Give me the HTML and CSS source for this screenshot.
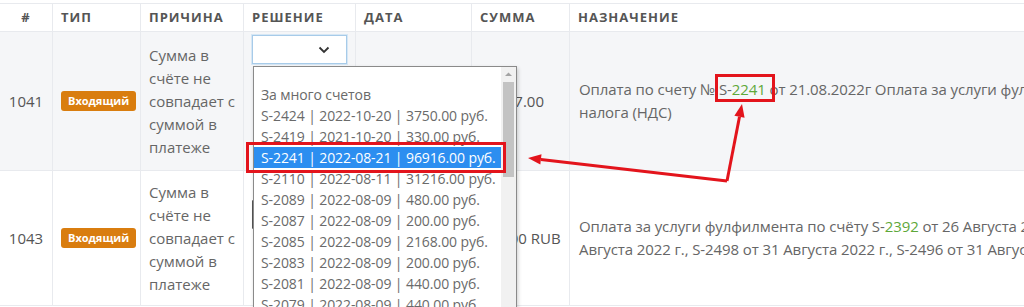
FILE: index.html
```html
<!DOCTYPE html>
<html lang="ru">
<head>
<meta charset="utf-8">
<link rel="stylesheet" href="styles.css">
</head>
<body>
<div class="page">
  <div class="grid">
    <div class="cell head center">#</div>
    <div class="cell head">Тип</div>
    <div class="cell head">Причина</div>
    <div class="cell head">Решение</div>
    <div class="cell head">Дата</div>
    <div class="cell head">Сумма</div>
    <div class="cell head">Назначение</div>

    <div class="cell alt center id">1041</div>
    <div class="cell alt"><span class="badge">Входящий</span></div>
    <div class="cell alt"><div class="txt">Сумма в<br>счёте не<br>совпадает с<br>суммой в<br>платеже</div></div>
    <div class="cell alt top1"><div class="select focused"><svg class="chev" width="12" height="8" viewBox="0 0 12 8"><path d="M1.5 1.5 L6 6 L10.5 1.5" fill="none" stroke="#333" stroke-width="1.8"/></svg></div></div>
    <div class="cell alt"></div>
    <div class="cell alt sum">10637.00</div>
    <div class="cell alt dest"><div class="txt">Оплата по счету № S-<span class="num">2241</span> от 21.08.2022г Оплата за услуги фулфилмента по договору оферты. Сумма без<br>налога (НДС)</div></div>

    <div class="cell center id">1043</div>
    <div class="cell"><span class="badge">Входящий</span></div>
    <div class="cell"><div class="txt">Сумма в<br>счёте не<br>совпадает с<br>суммой в<br>платеже</div></div>
    <div class="cell top2"><div class="select"></div></div>
    <div class="cell"></div>
    <div class="cell sum">480.00 RUB</div>
    <div class="cell dest"><div class="txt">Оплата за услуги фулфилмента по счёту S-<span class="num">2392</span> от 26 Августа 2022 г., S-2497 от 31<br>Августа 2022 г., S-2498 от 31 Августа 2022 г., S-2496 от 31 Августа 2022 г.</div></div>
  </div>

  <div class="dropdown">
    <div class="opts">
      <div class="opt blank"></div>
      <div class="opt">За много счетов</div>
      <div class="opt">S-2424 | 2022-10-20 | 3750.00 руб.</div>
      <div class="opt">S-2419 | 2021-10-20 | 330.00 руб.</div>
      <div class="opt sel">S-2241 | 2022-08-21 | 96916.00 руб.</div>
      <div class="opt">S-2110 | 2022-08-11 | 31216.00 руб.</div>
      <div class="opt">S-2089 | 2022-08-09 | 480.00 руб.</div>
      <div class="opt">S-2087 | 2022-08-09 | 200.00 руб.</div>
      <div class="opt">S-2085 | 2022-08-09 | 2168.00 руб.</div>
      <div class="opt">S-2083 | 2022-08-09 | 200.00 руб.</div>
      <div class="opt">S-2081 | 2022-08-09 | 440.00 руб.</div>
      <div class="opt">S-2079 | 2022-08-09 | 440.00 руб.</div>
    </div>
    <div class="sbar">
      <svg class="sarrow" width="15" height="14" viewBox="0 0 15 14"><path d="M4 9 L7.5 5.5 L11 9 Z" fill="#a3a3a3"/></svg>
      <div class="thumb"></div>
    </div>
  </div>

  <svg class="marks" width="1024" height="307" viewBox="0 0 1024 307">
    <rect x="247.5" y="143.5" width="257" height="28" fill="none" stroke="#e3141c" stroke-width="3"/>
    <rect x="716.5" y="75.5" width="57" height="25" fill="none" stroke="#e3141c" stroke-width="3"/>
    <line x1="727" y1="181" x2="540.9" y2="159.5" stroke="#e3141c" stroke-width="3"/>
    <polygon points="528,158 541.5,154.3 540.3,164.6" fill="#e3141c"/>
    <line x1="727" y1="181" x2="739.5" y2="116.8" stroke="#e3141c" stroke-width="3"/>
    <polygon points="742,104 744.6,117.8 734.4,115.8" fill="#e3141c"/>
  </svg>
</div>
</body>
</html>
```

FILE: styles.css
```css
html, body {
  margin: 0;
  padding: 0;
  background: #fff;
  overflow: hidden;
}
.page {
  position: relative;
  width: 1024px;
  height: 307px;
  overflow: hidden;
  padding-top: 3px;
  box-sizing: border-box;
  font-family: "Open Sans", "Noto Sans", sans-serif;
  color: #666;
}
.grid {
  display: grid;
  grid-template-columns: 53px 88px 103px 112px 116px 98px 1100px;
  grid-template-rows: 28px 139px 135px;
  width: 1670px;
  border-top: 1px solid #e8eaee;
}
.cell {
  display: flex;
  align-items: center;
  padding: 0 8px;
  border-right: 1px solid #e8eaee;
  border-bottom: 1px solid #e8eaee;
  box-sizing: border-box;
  font-size: 15px;
  line-height: 23px;
  white-space: nowrap;
  min-width: 0;
}
.cell.head {
  font-size: 13px;
  font-weight: 700;
  letter-spacing: 1px;
  text-transform: uppercase;
  color: #555;
  background: #fff;
}
.cell.center { justify-content: center; padding: 0 4px; }
.cell.alt { background: #f5f6f8; }
.cell.id { color: #555; }
.badge {
  display: inline-block;
  background: #d97d0f;
  color: #fff;
  font-size: 11px;
  font-weight: 700;
  line-height: 20px;
  padding: 0 7px;
  border-radius: 3px;
}
.top1 { align-items: flex-start; padding-top: 3px; }
.top2 { align-items: flex-start; padding-top: 29px; }
.select {
  width: 93px;
  height: 27px;
  border: 1px solid #ccc;
  border-left-color: #555;
  background: #fff;
  display: flex;
  align-items: center;
  justify-content: flex-end;
}
.select.focused {
  border: 1px solid #a7cbe9;
  box-shadow: 0 0 0 1px #d6e7f5;
}
.chev { margin-right: 16px; }
.sum { color: #555; }
.dest { padding-left: 9px; letter-spacing: -0.1px; }
.num { color: #5ea83a; }

.dropdown {
  position: absolute;
  left: 253px;
  top: 66px;
  width: 262px;
  height: 260px;
  background: #fff;
  border: 1px solid #8a8a8a;
  box-shadow: 1px 2px 4px rgba(0,0,0,0.2);
  display: flex;
}
.opts { flex: 1; }
.opt {
  height: 21px;
  line-height: 21px;
  font-size: 14px;
  color: #6a6a6a;
  padding-left: 7px;
  white-space: nowrap;
  letter-spacing: -0.1px;
}
.opt.blank { height: 17px; }
.opt.sel { background: #2c8ef0; color: #fff; }
.sbar {
  position: relative;
  width: 15px;
  background: #f1f1f1;
}
.sarrow { display: block; }
.thumb {
  position: absolute;
  left: 2px;
  top: 15px;
  width: 11px;
  height: 95px;
  background: #c3c3c3;
}
.marks {
  position: absolute;
  left: 0;
  top: 0;
}
```
